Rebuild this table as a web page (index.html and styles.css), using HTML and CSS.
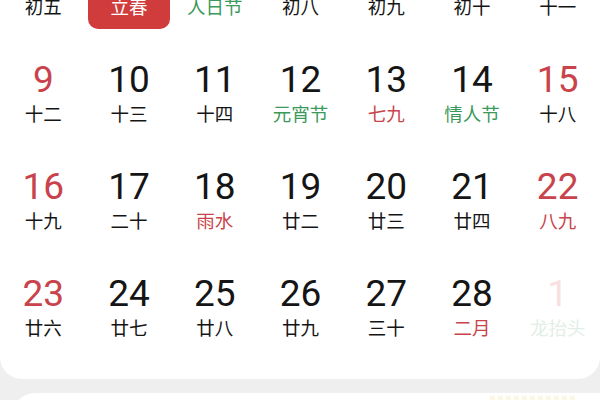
FILE: index.html
```html
<!DOCTYPE html>
<html lang="zh">
<head>
<meta charset="utf-8">
<link rel="stylesheet" href="styles.css">
</head>
<body>
<div class="card">
  <div class="grid">
    <div class="day"><span class="num">2</span><span class="sub">初五</span></div>
    <div class="day sel"><span class="num">3</span><span class="sub">立春</span></div>
    <div class="day"><span class="num">4</span><span class="sub green">人日节</span></div>
    <div class="day"><span class="num">5</span><span class="sub">初八</span></div>
    <div class="day"><span class="num">6</span><span class="sub">初九</span></div>
    <div class="day"><span class="num">7</span><span class="sub">初十</span></div>
    <div class="day"><span class="num">8</span><span class="sub">十一</span></div>

    <div class="day"><span class="num red">9</span><span class="sub">十二</span></div>
    <div class="day"><span class="num">10</span><span class="sub">十三</span></div>
    <div class="day"><span class="num">11</span><span class="sub">十四</span></div>
    <div class="day"><span class="num">12</span><span class="sub green">元宵节</span></div>
    <div class="day"><span class="num">13</span><span class="sub red">七九</span></div>
    <div class="day"><span class="num">14</span><span class="sub green">情人节</span></div>
    <div class="day"><span class="num red">15</span><span class="sub">十八</span></div>

    <div class="day"><span class="num red">16</span><span class="sub">十九</span></div>
    <div class="day"><span class="num">17</span><span class="sub">二十</span></div>
    <div class="day"><span class="num">18</span><span class="sub red">雨水</span></div>
    <div class="day"><span class="num">19</span><span class="sub">廿二</span></div>
    <div class="day"><span class="num">20</span><span class="sub">廿三</span></div>
    <div class="day"><span class="num">21</span><span class="sub">廿四</span></div>
    <div class="day"><span class="num red">22</span><span class="sub red">八九</span></div>

    <div class="day"><span class="num red">23</span><span class="sub">廿六</span></div>
    <div class="day"><span class="num">24</span><span class="sub">廿七</span></div>
    <div class="day"><span class="num">25</span><span class="sub">廿八</span></div>
    <div class="day"><span class="num">26</span><span class="sub">廿九</span></div>
    <div class="day"><span class="num">27</span><span class="sub">三十</span></div>
    <div class="day"><span class="num">28</span><span class="sub red">二月</span></div>
    <div class="day faded"><span class="num">1</span><span class="sub">龙抬头</span></div>
  </div>
</div>
<div class="card2"><div class="deco"></div></div>
</body>
</html>
```
FILE: styles.css
```css
html, body {
  margin: 0;
  padding: 0;
  background: #efefef;
  overflow: hidden;
  height: 400px;
}
body {
  font-family: "Noto Sans CJK SC", "Noto Sans", sans-serif;
  color: #151515;
}
.card {
  background: #fff;
  margin-top: -60px;
  height: 439px;
  border-radius: 0 0 22px 22px;
  overflow: hidden;
}
.grid {
  display: grid;
  grid-template-columns: repeat(7, 1fr);
  row-gap: 31px;
  padding-top: 13px;
}
.day {
  height: 76px;
  margin: 0 1px 0 2px;
  display: flex;
  flex-direction: column;
  align-items: center;
  border-radius: 10px;
}
.num {
  font-family: Roboto, "Noto Sans", sans-serif;
  font-size: 37px;
  line-height: 40px;
  height: 40px;
  font-weight: 400;
}
.sub {
  font-size: 18.5px;
  line-height: 26px;
  height: 26px;
}
.red { color: #c8434b; }
.green { color: #3b9a5b; }
.sel { background: #d03c3c; }
.sel .num, .sel .sub { color: #fff; }
.faded .num { color: #f7dfe2; }
.faded .sub { color: #e2efe6; }
.card2 {
  background: #fff;
  margin: 14px 0 0 10px;
  height: 60px;
  border-radius: 26px 0 0 0;
  position: relative;
}
.deco {
  position: absolute;
  left: 480px;
  top: 3px;
  width: 88px;
  height: 6px;
  background: repeating-linear-gradient(90deg, #fbf6e2 0 5px, #fff 5px 8px);
}
```
